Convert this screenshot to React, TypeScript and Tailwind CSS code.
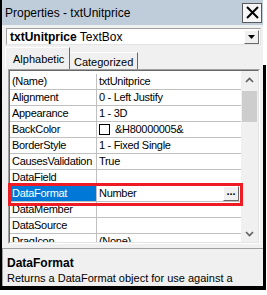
import React from "react";

const rows: { name: string; value: string; swatch?: boolean; selected?: boolean }[] = [
  { name: "(Name)", value: "txtUnitprice" },
  { name: "Alignment", value: "0 - Left Justify" },
  { name: "Appearance", value: "1 - 3D" },
  { name: "BackColor", value: "&H80000005&", swatch: true },
  { name: "BorderStyle", value: "1 - Fixed Single" },
  { name: "CausesValidation", value: "True" },
  { name: "DataField", value: "" },
  { name: "DataFormat", value: "Number", selected: true },
  { name: "DataMember", value: "" },
  { name: "DataSource", value: "" },
  { name: "DragIcon", value: "(None)" },
];

const Chevron = ({ up }: { up?: boolean }) => (
  <svg width="9" height="6" viewBox="0 0 9 6">
    <polyline
      points={up ? "1,5 4.5,1.5 8,5" : "1,1 4.5,4.5 8,1"}
      fill="none"
      stroke="#606060"
      strokeWidth="1.6"
    />
  </svg>
);

export default function App() {
  return (
    <div className="w-[267px] h-[295px] bg-white font-['Liberation_Sans',Arial,sans-serif] text-black">
      <div className="flex w-[266px] h-[290px]">
        {/* window */}
        <div className="w-[263px] h-[290px] flex flex-col bg-[#f0f0f0] border-l-2 border-b-4 border-black">
          {/* title bar */}
          <div className="h-[26px] bg-[#bfcddb] flex items-center justify-between pl-[3px] pr-[1px]">
            <span className="text-[12px] leading-none">Properties - txtUnitprice</span>
            <div className="w-[20px] h-[20px] border border-[#5a5a5a] bg-[#f6f6f6] flex items-center justify-center">
              <svg width="13" height="13" viewBox="0 0 13 13">
                <path d="M1 1 L12 12 M12 1 L1 12" stroke="#000" strokeWidth="2" />
              </svg>
            </div>
          </div>

          {/* object combo */}
          <div className="mt-[3px] ml-[4px] mr-[2px] h-[17px] bg-white border border-t-[#a0a0a0] border-l-[#a0a0a0] border-b-[#e3e3e3] border-r-[#e3e3e3] flex items-center">
            <span className="pl-[3px] text-[12px] leading-none flex-1">
              <b>txtUnitprice</b> TextBox
            </span>
            <div className="w-[15px] h-[14px] mr-[1px] bg-[#f0f0f0] border border-t-white border-l-white border-b-[#696969] border-r-[#696969] flex items-center justify-center">
              <svg width="7" height="4" viewBox="0 0 7 4">
                <path d="M0 0 L7 0 L3.5 4 Z" fill="#000" />
              </svg>
            </div>
          </div>

          {/* tabs */}
          <div className="mt-[2px] ml-[3px] h-[22px] flex items-end">
            <div className="h-[22px] w-[65px] border-t border-l border-white border-r border-r-[#696969] pl-[7px] pt-[5px] text-[11px] leading-[13px]">
              Alphabetic
            </div>
            <div className="h-[17px] w-[68px] border-t border-white border-r border-r-[#696969] pl-[4px] pt-[3px] text-[11px] leading-[13px]">
              Categorized
            </div>
          </div>

          {/* property grid */}
          <div className="relative ml-[6px] mr-[3px] h-[175px] border border-t-[#a0a0a0] border-l-[#a0a0a0] border-b-white border-r-white">
            <div className="h-full flex border border-t-[#696969] border-l-[#696969] border-b-[#e3e3e3] border-r-[#e3e3e3] bg-white">
              <div className="flex-1 overflow-hidden pt-[3px]">
                {rows.map((r) => (
                  <div key={r.name} className="h-[16px] flex border-b border-[#c0c0c0] text-[11px] leading-none tracking-[-0.3px]">
                    <div
                      className={
                        r.selected
                          ? "w-[87px] border-r border-[#c0c0c0] pl-[2px] flex items-center bg-[#0078d7] text-white"
                          : "w-[87px] border-r border-[#c0c0c0] pl-[2px] flex items-center"
                      }
                    >
                      {r.name}
                    </div>
                    <div className="flex-1 flex items-center pl-[2px]">
                      {r.swatch && <span className="w-[11px] h-[11px] border border-black bg-white mr-[5px]" />}
                      <span className="flex-1">{r.value}</span>
                      {r.selected && (
                        <div className="w-[16px] h-[15px] mr-[2px] bg-[#f0f0f0] border border-t-white border-l-white border-b-[#696969] border-r-[#696969] flex items-end justify-center pb-[3px] text-[11px] font-bold leading-none tracking-normal">
                          ...
                        </div>
                      )}
                    </div>
                  </div>
                ))}
              </div>
              {/* scrollbar */}
              <div className="w-[17px] bg-[#f0f0f0] flex flex-col">
                <div className="h-[17px] flex items-center justify-center">
                  <Chevron up />
                </div>
                <div className="mt-[3px] mx-[1px] h-[31px] bg-[#cdcdcd]" />
                <div className="flex-1" />
                <div className="h-[17px] flex items-center justify-center">
                  <Chevron />
                </div>
              </div>
            </div>
            {/* highlight annotation */}
            <div className="absolute left-[-1px] top-[113px] w-[235px] h-[23px] border-[3px] border-[#ed1c24]" />
          </div>

          {/* description */}
          <div className="mt-[4px] flex-1 border-t border-l border-[#a0a0a0] pl-[4px] pt-[7px]">
            <div className="text-[12px] font-bold leading-[15px]">DataFormat</div>
            <div className="text-[11px] leading-[15px]">Returns a DataFormat object for use against a</div>
          </div>
        </div>
        {/* shadow strip */}
        <div className="w-[3px] flex flex-col">
          <div className="h-[65px] bg-white" />
          <div className="flex-1 bg-black" />
        </div>
      </div>
    </div>
  );
}
